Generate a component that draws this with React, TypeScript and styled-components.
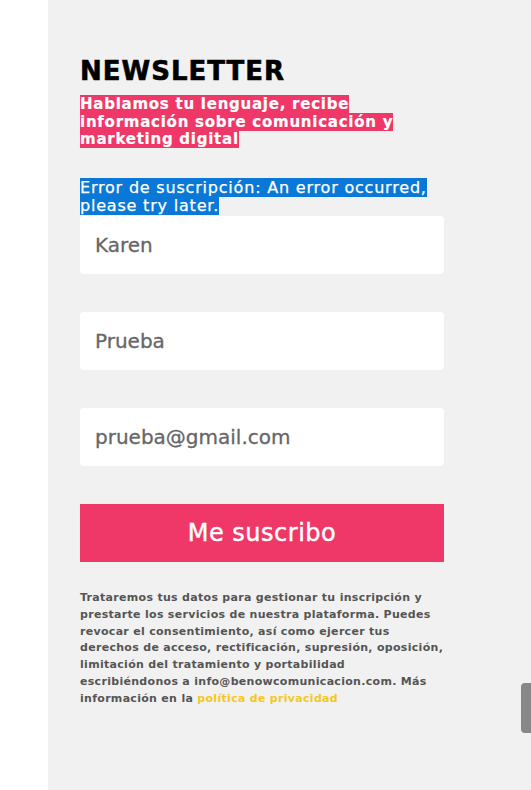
import React from 'react';
import styled, { createGlobalStyle } from 'styled-components';

const GlobalStyle = createGlobalStyle`
  html, body {
    margin: 0;
    padding: 0;
    background: #ffffff;
  }
  body {
    font-family: "DejaVu Sans", "Liberation Sans", sans-serif;
  }
`;

const Page = styled.div`
  display: flex;
  min-height: 790px;
  width: 531px;
`;

const Gutter = styled.div`
  width: 48px;
  flex-shrink: 0;
  background: #ffffff;
`;

const Panel = styled.section`
  flex: 1;
  background: #f1f1f1;
  padding: 54px 87px 0 32px;
  display: flex;
  flex-direction: column;
`;

const Title = styled.h2`
  margin: 0;
  font-size: 26px;
  line-height: 34px;
  font-weight: 900;
  color: #000;
  letter-spacing: 1px;
  -webkit-text-stroke: 0.6px #000;
`;

const Lead = styled.p`
  margin: 8px 0 0;
  font-size: 15px;
  line-height: 17.6px;
  font-weight: 700;
  letter-spacing: 0.75px;
  -webkit-text-stroke: 0.2px #fff;
`;

type MarkProps = { tone: 'pink' | 'blue' };

const Mark = styled.span<MarkProps>`
  background: ${(p) => (p.tone === 'pink' ? '#ef3768' : '#0a78d6')};
  color: #ffffff;
`;

const ErrorNote = styled.p`
  margin: 30px 0 0;
  font-size: 16px;
  line-height: 18.6px;
  font-weight: 400;
  letter-spacing: 0.8px;
  -webkit-text-stroke: 0.25px #fff;
`;

const Form = styled.form`
  display: flex;
  flex-direction: column;
  gap: 38px;
`;

const Field = styled.input`
  box-sizing: border-box;
  width: 100%;
  height: 58px;
  border: none;
  border-radius: 4px;
  background: #ffffff;
  padding: 0 15px;
  font-family: "DejaVu Sans", sans-serif;
  font-size: 20px;
  color: #666666;
  -webkit-text-stroke: 0.3px #666666;
  outline: none;
`;

const Submit = styled.button`
  height: 58px;
  border: none;
  background: #ef3768;
  color: #ffffff;
  font-family: "DejaVu Sans", sans-serif;
  font-size: 24px;
  letter-spacing: 0.5px;
  -webkit-text-stroke: 0.4px #fff;
  cursor: pointer;
`;

const Legal = styled.p`
  margin: 28px 0 0;
  font-size: 11px;
  line-height: 16.8px;
  font-weight: 700;
  letter-spacing: 0.3px;
  color: #555555;
`;

const PolicyLink = styled.a`
  color: #f6c81b;
  text-decoration: none;
`;

const ScrollThumb = styled.div`
  position: fixed;
  right: 0;
  top: 683px;
  width: 10px;
  height: 50px;
  background: #888888;
  border-radius: 4px 0 0 4px;
`;

export default function App() {
  return (
    <>
      <GlobalStyle />
      <Page>
        <Gutter />
        <Panel>
          <Title>NEWSLETTER</Title>
          <Lead>
            <Mark tone="pink">
              Hablamos tu lenguaje, recibe información sobre comunicación y marketing digital
            </Mark>
          </Lead>
          <ErrorNote>
            <Mark tone="blue">Error de suscripción: An error occurred, please try later.</Mark>
          </ErrorNote>
          <Form onSubmit={(e) => e.preventDefault()}>
            <Field type="text" defaultValue="Karen" />
            <Field type="text" defaultValue="Prueba" />
            <Field type="email" defaultValue="prueba@gmail.com" />
            <Submit type="submit">Me suscribo</Submit>
          </Form>
          <Legal>
            Trataremos tus datos para gestionar tu inscripción y prestarte los servicios de nuestra
            plataforma. Puedes revocar el consentimiento, así como ejercer tus derechos de acceso,
            rectificación, supresión, oposición, limitación del tratamiento y portabilidad
            escribiéndonos a info@benowcomunicacion.com. Más información en la{' '}
            <PolicyLink href="#">política de privacidad</PolicyLink>
          </Legal>
        </Panel>
      </Page>
      <ScrollThumb />
    </>
  );
}
